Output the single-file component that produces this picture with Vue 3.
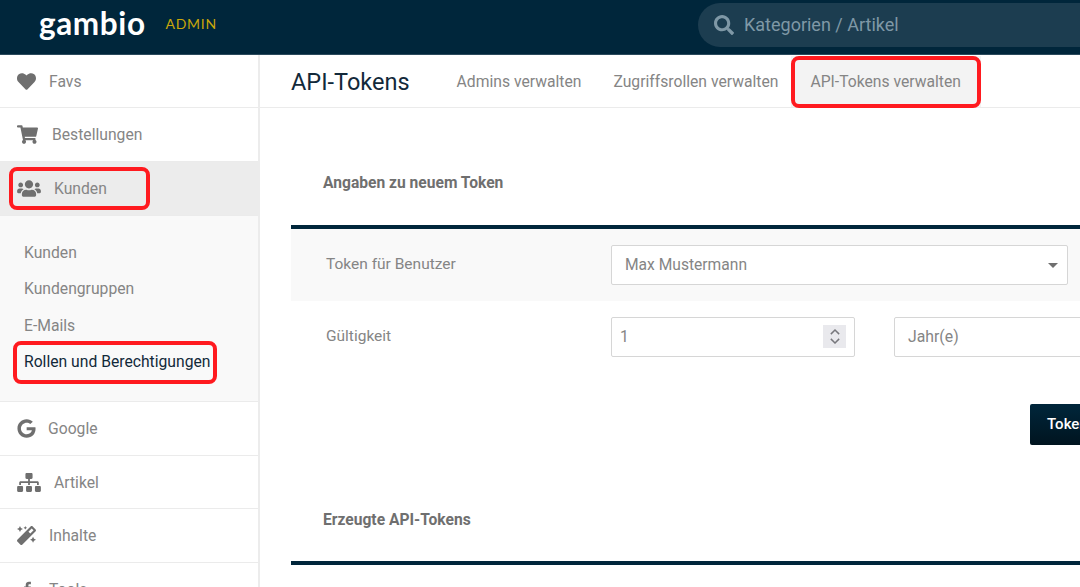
<script setup>
const subs = ['Kunden', 'Kundengruppen', 'E-Mails']
const tabs = ['Admins verwalten', 'Zugriffsrollen verwalten']
</script>

<template>
  <div class="page">
    <header class="top">
      <div class="brand">
        <span class="logo">gambio</span>
        <span class="admin">ADMIN</span>
      </div>
      <div class="search">
        <svg class="search-icon" viewBox="0 0 512 512"><path d="M505 442.700 405.300 343c-4.500-4.500-10.600-7-17-7H372c27.600-35.300 44-79.700 44-128C416 93.100 322.900 0 208 0S0 93.100 0 208s93.100 208 208 208c48.300 0 92.700-16.400 128-44v16.300c0 6.400 2.500 12.500 7 17l99.700 99.700c9.400 9.400 24.600 9.400 33.900 0l28.300-28.300c9.400-9.400 9.400-24.600.1-34zM208 336c-70.700 0-128-57.200-128-128 0-70.700 57.200-128 128-128 70.700 0 128 57.200 128 128 0 70.700-57.200 128-128 128z"/></svg>
        <span>Kategorien / Artikel</span>
      </div>
    </header>

    <div class="body">
      <aside class="side">
        <div class="nav">
          <svg class="ico" viewBox="0 0 512 512"><path d="M462.300 62.600C407.500 15.900 326 24.300 275.700 76.200L256 96.500l-19.700-20.300C186.100 24.300 104.500 15.900 49.700 62.600c-62.800 53.600-66.100 149.800-9.900 207.900l193.500 199.800c12.500 12.900 32.800 12.900 45.300 0l193.500-199.800c56.300-58.100 53-154.300-9.800-207.900z"/></svg>
          <span class="t-favs">Favs</span>
        </div>
        <div class="nav">
          <svg class="ico cart" viewBox="0 0 576 512"><path d="M528.100 301.300l47.300-208C578.800 78.300 567.400 64 552 64H159.200l-9.200-44.800C147.800 8 137.900 0 126.500 0H24C10.700 0 0 10.700 0 24v16c0 13.300 10.700 24 24 24h69.900l70.200 343.400C147.300 417.100 136 435.200 136 456c0 30.900 25.100 56 56 56s56-25.100 56-56c0-15.700-6.400-29.800-16.800-40h209.600C430.400 426.200 424 440.300 424 456c0 30.900 25.100 56 56 56s56-25.100 56-56c0-22.200-12.900-41.300-31.600-50.400l5.500-24.300c3.400-15-8-29.300-23.400-29.300H218.100l-6.500-32h293.100c11.200 0 20.900-7.800 23.400-18.700z"/></svg>
          <span class="t-best">Bestellungen</span>
        </div>
        <div class="nav active">
          <svg class="ico wide" viewBox="0 0 640 512"><path d="M96 224c35.300 0 64-28.700 64-64s-28.700-64-64-64-64 28.700-64 64 28.700 64 64 64zm448 0c35.300 0 64-28.700 64-64s-28.700-64-64-64-64 28.700-64 64 28.700 64 64 64zm32 32h-64c-17.600 0-33.500 7.100-45.100 18.600 40.300 22.100 68.900 62 75.100 109.400h66c17.700 0 32-14.300 32-32v-32c0-35.300-28.700-64-64-64zm-256 0c61.900 0 112-50.100 112-112S381.900 32 320 32 208 82.100 208 144s50.100 112 112 112zm76.800 32h-8.300c-20.800 10-43.900 16-68.500 16s-47.600-6-68.500-16h-8.300C179.600 288 128 339.600 128 403.200V432c0 26.500 21.500 48 48 48h288c26.500 0 48-21.500 48-48v-28.800c0-63.600-51.600-115.200-115.200-115.200zm-223.700-13.400C161.500 263.100 145.600 256 128 256H64c-35.300 0-64 28.700-64 64v32c0 17.700 14.300 32 32 32h65.900c6.300-47.400 34.900-87.300 75.200-109.400z"/></svg>
          <span class="t-kunden">Kunden</span>
          <i class="mark mark-kunden"></i>
        </div>
        <div class="sub">
          <a v-for="s in subs" :key="s" class="sub-item">{{ s }}</a>
          <a class="sub-item current">Rollen und Berechtigungen<i class="mark mark-rollen"></i></a>
        </div>
        <div class="nav">
          <svg class="ico g" viewBox="0 0 488 512"><path d="M488 261.800C488 403.300 391.100 504 248 504 110.800 504 0 393.200 0 256S110.800 8 248 8c66.800 0 123 24.500 166.300 64.900l-67.500 64.900C258.500 52.600 94.300 116.600 94.300 256c0 86.500 69.100 156.600 153.700 156.600 98.200 0 135-70.400 140.800-106.900H248v-85.300h236.100c2.300 12.700 3.900 24.900 3.900 41.400z"/></svg>
          <span class="t-google">Google</span>
        </div>
        <div class="nav">
          <svg class="ico wide" viewBox="0 0 640 512"><path d="M128 352H32c-17.700 0-32 14.300-32 32v96c0 17.700 14.300 32 32 32h96c17.700 0 32-14.300 32-32v-96c0-17.700-14.300-32-32-32zm-24-80h192v48h48v-48h192v48h48v-57.600c0-21.200-17.200-38.400-38.400-38.400H344v-64h40c17.700 0 32-14.300 32-32V32c0-17.700-14.300-32-32-32H256c-17.700 0-32 14.300-32 32v96c0 17.700 14.300 32 32 32h40v64H94.400C73.200 224 56 241.200 56 262.400V320h48v-48zm264 80h-96c-17.700 0-32 14.300-32 32v96c0 17.700 14.300 32 32 32h96c17.700 0 32-14.300 32-32v-96c0-17.700-14.300-32-32-32zm240 0h-96c-17.700 0-32 14.300-32 32v96c0 17.700 14.300 32 32 32h96c17.700 0 32-14.300 32-32v-96c0-17.700-14.300-32-32-32z"/></svg>
          <span class="t-artikel">Artikel</span>
        </div>
        <div class="nav">
          <svg class="ico" viewBox="0 0 512 512"><path d="M224 96l16-32 32-16-32-16-16-32-16 32-32 16 32 16 16 32zM80 160l26.700-53.300L160 80l-53.300-26.700L80 0 53.300 53.300 0 80l53.300 26.700L80 160zm352 128l-26.700 53.300L352 368l53.300 26.700L432 448l26.700-53.300L512 368l-53.300-26.700L432 288zm70.600-193.800L417.800 9.400C411.500 3.100 403.300 0 395.200 0c-8.200 0-16.400 3.100-22.600 9.400L9.400 372.500c-12.500 12.500-12.500 32.800 0 45.200l84.900 84.900c6.200 6.200 14.400 9.400 22.600 9.400 8.200 0 16.400-3.100 22.600-9.400l363.100-363.200c12.500-12.400 12.500-32.700 0-45.200zM359.500 203.500l-50.900-50.900 86.600-86.600 50.900 50.900-86.600 86.600z"/></svg>
          <span class="t-inhalte">Inhalte</span>
        </div>
        <div class="nav">
          <svg class="ico" viewBox="0 0 320 512"><path d="M279.100 48h-54c-47 0-86 25-86 86v38H94v64h45v276h72V236h58l10-64h-68v-30c0-18 8-30 30-30h38z"/></svg>
          <span class="t-favs">Tools</span>
        </div>
      </aside>

      <main class="main">
        <div class="tabs">
          <h1 class="title">API-Tokens</h1>
          <a v-for="t in tabs" :key="t" class="tab">{{ t }}</a>
          <a class="tab on">API-Tokens verwalten<i class="mark mark-tab"></i></a>
        </div>

        <section class="content">
          <h2 class="sec first">Angaben zu neuem Token</h2>
          <div class="panel">
            <div class="row shaded">
              <label class="lbl">Token für Benutzer</label>
              <div class="field select full">
                <span>Max Mustermann</span>
                <i class="caret"></i>
              </div>
            </div>
            <div class="row">
              <label class="lbl">Gültigkeit</label>
              <div class="field num">
                <span class="one">1</span>
                <span class="spin">
                  <svg viewBox="0 0 10 16"><path d="M1.500 6 5 2.500 8.500 6M1.500 10 5 13.500 8.500 10" /></svg>
                </span>
              </div>
              <div class="field unit"><span>Jahr(e)</span></div>
            </div>
          </div>
          <div class="actions"><button class="btn">Token erzeugen</button></div>
          <h2 class="sec second">Erzeugte API-Tokens</h2>
          <div class="rule"></div>
        </section>
      </main>
    </div>
  </div>
</template>

<style>
html, body { margin: 0; overflow: hidden; background: #fff; }
</style>

<style scoped>
.page {
  width: 1080px; height: 587px; overflow: hidden;
  display: flex; flex-direction: column;
  font-family: Roboto, "Liberation Sans", sans-serif;
  font-size: 15px; color: #858585;
}
.top {
  height: 54.800px; flex: none; background: #00263b;
  display: flex; align-items: center;
  border-bottom: 1px solid #2b4a5c; box-sizing: border-box;
}
.brand { width: 698px; flex: none; display: flex; align-items: center; padding-left: 39px; box-sizing: border-box; }
.logo { font: 700 31.500px/1 Lato, sans-serif; color: #fff; letter-spacing: .6px; position: relative; top: -3px; }
.admin { font: 400 14px/1 Lato, sans-serif; letter-spacing: .7px; color: #c9a70a; margin-left: 20px; position: relative; top: -3px; }
.search {
  flex: 1; height: 44px; margin-top: -4px;
  background: #1c3d50; border-radius: 22px 0 0 22px;
  display: flex; align-items: center; color: #7f98a6; font-size: 18px;
  padding-left: 16px;
}
.search-icon { width: 20px; height: 20px; fill: #7f98a6; margin-right: 10px; }

.body { flex: 1; display: flex; min-height: 0; }
.side { flex: none; border-right: 2px solid #ececec; width: 258px; }
.nav {
  height: 53.600px; box-sizing: border-box; position: relative;
  display: flex; align-items: center; padding-left: 17px;
  border-bottom: 1.500px solid #ebebeb; font-size: 15.700px;
}
.nav.active { background: #ececec; }
.ico { width: 19px; height: 19px; fill: #6f6f6f; flex: none; }
.ico.wide { width: 24px; }
.ico.cart { width: 21px; height: 19px; }
.t-favs { margin-left: 13px; }
.t-best { margin-left: 14px; }
.t-kunden { margin-left: 13px; }
.t-google { margin-left: 12px; }
.t-artikel { margin-left: 13px; }
.t-inhalte { margin-left: 13px; }
.sub {
  height: 186.600px; box-sizing: border-box; padding: 19px 0 0 24px;
  background: #f9f9f9; border-bottom: 1.500px solid #ebebeb;
}
.sub-item { display: block; height: 36.500px; line-height: 36.500px; font-size: 15.700px; position: relative; white-space: nowrap; }
.sub-item.current { color: #12293a; }

.mark { position: absolute; border: 4px solid #ff1a1f; border-radius: 8px; box-sizing: border-box; pointer-events: none; }
.mark-kunden { left: 9px; top: 5px; width: 141px; height: 43px; }
.mark-rollen { left: -11px; top: -3px; width: 204px; height: 43px; }
.mark-tab { left: 0; top: 0; width: 190px; height: 52px; }

.main { flex: 1; min-width: 0; }
.tabs {
  height: 53.600px; box-sizing: border-box; display: flex; align-items: center;
  padding: 1px 0 0 31px; border-bottom: 1.500px solid #ebebeb; white-space: nowrap;
}
.title { margin: 0 47px 0 0; font-size: 23.500px; font-weight: 400; color: #12293a; }
.tab { font-size: 15.700px; margin-right: 32px; }
.tab.on {
  position: relative; margin: 0 0 0 -19px; align-self: stretch;
  padding: 0 19px; width: 190px; box-sizing: border-box;
  background: #f3f3f3; display: flex; align-items: center;
}
.content { padding-left: 31px; }
.sec { margin: 0; font-size: 15.600px; font-weight: 700; color: #6f6f6f; padding-left: 32px; white-space: nowrap; }
.sec.first { padding-top: 65px; line-height: 20px; height: 20px; }
.panel { margin-top: 32px; border-top: 4px solid #00263b; width: 900px; }
.row { display: flex; align-items: center; position: relative; }
.row.shaded { height: 71.500px; background: #f9f9f9; }
.row:not(.shaded) { height: 72px; }
.lbl { width: 320px; padding-left: 35px; box-sizing: border-box; flex: none; font-size: 15.500px; margin-top: -2px; }
.field {
  height: 40px; box-sizing: border-box; border: 1.500px solid #d6d6d6; border-radius: 2px;
  background: #fff; display: flex; align-items: center; font-size: 15.600px; position: relative; flex: none;
}
.select.full { width: 457px; padding-left: 13px; justify-content: space-between; padding-right: 9px; }
.caret { width: 0; height: 0; border: 5px solid transparent; border-top: 5px solid #6f6f6f; border-bottom: 0; }
.num { width: 244px; padding-left: 8px; justify-content: space-between; padding-right: 8px; }
.spin { width: 23px; height: 23px; background: #e9e9ed; display: flex; align-items: center; justify-content: center; }
.spin svg { width: 12px; height: 19px; fill: none; stroke: #77777c; stroke-width: 1.200; }
.unit { width: 300px; margin-left: 39px; padding-left: 13px; font-size: 15.800px; }
.actions { padding: 31px 0 0 739px; height: 41px; }
.btn {
  width: 140px; height: 41px; border: 0; border-radius: 2px; text-align: left; padding: 0 0 0 17px;
  background: linear-gradient(#00263b, #00141f); color: #fff;
  font: 500 15px Roboto, sans-serif; white-space: nowrap;
}
.sec.second { padding-top: 65px; line-height: 20px; }
.rule { margin-top: 31px; border-top: 4px solid #00263b; width: 900px; }
</style>
